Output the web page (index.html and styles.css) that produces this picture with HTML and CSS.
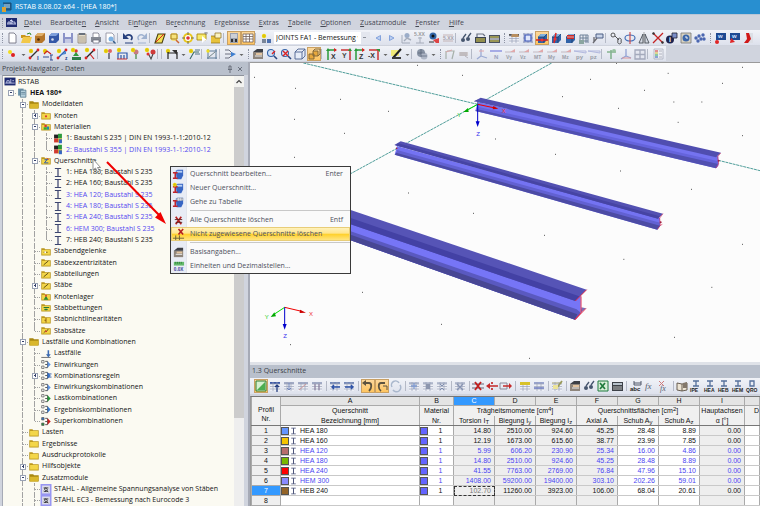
FILE: index.html
```html
<!DOCTYPE html>
<html lang="de">
<head>
<meta charset="utf-8">
<title>RSTAB 8.08.02 x64 - [HEA 180*]</title>
<link rel="stylesheet" href="styles.css">
</head>
<body>
<header class="titlebar">
  <svg class="app-icon" viewBox="0 0 10 10"><path d="M1 1h8v7H4" fill="#24618f" stroke="#174a73"/><path d="M2 3h6M2 5h6" stroke="#bfe0f5"/><path d="M0 5h4v5H0z" fill="#d8a236"/></svg>
  <span>RSTAB 8.08.02 x64 - [HEA 180*]</span>
</header>
<nav class="menubar">
  <i class="grip"></i>
  <svg class="logo" viewBox="0 0 11 9"><path d="M0 0h11v9H0z" fill="#1e2a70"/><path d="M1 6h9M2 6V4h2v2M5 6V2h1v4M7 4h2v2M4 3l1-1 2 2" stroke="#dfe4ff" fill="none" stroke-width=".8"/></svg>
  <button><u>D</u>atei</button><button>Bearbeite<u>n</u></button><button><u>A</u>nsicht</button><button>Ei<u>n</u>fügen</button><button>Be<u>r</u>echnung</button><button>Er<u>g</u>ebnisse</button><button><u>E</u>xtras</button><button><u>T</u>abelle</button><button><u>O</u>ptionen</button><button><u>Z</u>usatzmodule</button><button><u>F</u>enster</button><button><u>H</u>ilfe</button>
</nav>
<div class="toolbars">
  <div class="toolrow">
    <div class="toolbar" data-tools="new open box boxblue save paper print preview | undo redo | para find target select folderout | *panel *grid | nodesun"></div>
    <label class="combo"><select aria-label="Lastfall"><option>JOINTS FA1 - Bemessung v</option></select></label>
    <div class="toolbar joined" data-tools="prev next person vals eye valsred | glasses sheet sheet2"></div>
    <div class="toolbar" data-tools="hand gridblue *cubered cuberot cubefill mesh clip | chain rotate mirror delete link clock dots"></div>
    <div class="toolbar grow" data-tools="flagblue flagred pdf"></div>
  </div>
  <div class="toolrow">
    <div class="toolbar" data-tools="node v member section memset support hinge | pin frame pinred pins || dim v dimgreen | raster | flow v"></div>
    <div class="toolbar" data-tools="photo zoomin zoomout cube *cubes | vx vy vz vmx v pencil v | globe v"></div>
    <div class="toolbar" data-tools="deform note | axes n qy qz mt my mz py pz | greenup axes2 windows | legend"></div>
  </div>
</div>
<main class="work">
  <aside class="navigator">
    <h2 class="panel-title"><span>Projekt-Navigator - Daten</span>
      <button aria-label="Anheften"><svg viewBox="0 0 6 8"><path d="M1 4.5h4M2 4V1h2v3M3 5v3" stroke="#555c68" fill="none" stroke-width=".8"/></svg></button>
      <button aria-label="Schließen"><svg viewBox="0 0 6 8"><path d="M1 2l4 4M5 2L1 6" stroke="#555c68" stroke-width=".8"/></svg></button>
    </h2>
    <div class="tree-frame">
      <ul class="tree" id="tree"></ul>
      <div class="scroll"><svg viewBox="0 0 9 11"><path d="M2 7l2.500-2.500L7 7" fill="none" stroke="#444" stroke-width="1.200"/></svg><div class="thumb"></div></div>
    </div>
  </aside>
  <section class="right">
    <div class="view">
      <svg viewBox="0 3 1530 897" preserveAspectRatio="xMinYMin slice">
        <g stroke="#2c8a86" stroke-width="2.500" stroke-dasharray="9 2" fill="none"><path d="M160 3L683 127M905 3L683 127L302 335M1405 295L1530 326"/></g>
        <path id="specks" stroke="#555" stroke-width="3" d=""/>
        <g>
          <path d="M683 120L1405 283V312L1398 319L676 147Z" fill="#7473f0"/>
          <path d="M683 140L1405 304L1398 319L676 147Z" fill="#5150b0"/>
          <path d="M683 134L1405 298V306L683 142Z" fill="#6564dc"/>
          <path d="M673 118L692 107L1413 272L1398 286Z" fill="#504eb0"/>
          <path d="M683 119V142M673 118L683 114" stroke="#45438f" stroke-width="2"/>
          <path d="M1412 273L1403 284L1406 306L1398 318" stroke="#d3315a" stroke-width="2" fill="none"/>
          <circle cx="1406" cy="296" r="3" fill="#a02040"/>
        </g>
        <g>
          <path d="M441 252L1230 468V490L1222 503L434 278Z" fill="#7473f2"/>
          <path d="M441 270L1232 490L1222 503L434 278Z" fill="#4c4ba4"/>
          <path d="M441 264L1230 482V491L441 273Z" fill="#6261d2"/>
          <path d="M433 249L452 238L1239 455L1224 470Z" fill="#5351b2"/>
          <path d="M436 250L1224 470L1229 463L445 244Z" fill="#4644a4"/>
          <path d="M1239 455L1229 468L1231 490L1222 502M1231 490l6-3" stroke="#d3315a" stroke-width="2" fill="none"/>
          <circle cx="1232" cy="481" r="3" fill="#a02040"/><circle cx="440" cy="259" r="2.500" fill="#a02040"/>
        </g>
        <g>
          <path d="M302 470L992 700V752L975 773L302 535Z" fill="#7675f6"/>
          <path d="M302 508L980 742L992 752L975 773L302 535Z" fill="#5a59c0"/>
          <path d="M302 518L982 757L975 773L302 535Z" fill="#484794"/>
          <path d="M302 444L1010 683L976 717L302 487Z" fill="#5654b6"/>
          <path d="M302 468L988 703L976 717L302 487Z" fill="#4341a4"/>
          <path d="M992 752L1008 739L994 736Z" fill="#7a6fb5"/>
          <path d="M1010 683L976 717M993 703V752L975 773L1008 739" stroke="#e02b4c" stroke-width="3" fill="none"/>
        </g>
        <g fill="none" stroke-width="3">
          <path d="M683 127L735 138" stroke="#e00"/><path d="M730 132L745 140L728 142Z" fill="#c00"/>
          <path d="M683 127L650 145" stroke="#0d0"/><path d="M654 138L640 150L656 150Z" fill="#0a0"/>
          <path d="M683 127V185" stroke="#00c"/><path d="M677 178H689L683 195Z" fill="#00c"/>
        </g>
        <g fill="none" stroke-width="3">
          <path d="M104 736L155 748" stroke="#e00"/><path d="M150 743L168 752L149 753Z" fill="#c00"/>
          <path d="M104 736L72 757" stroke="#0d0"/><path d="M73 751L62 765L78 763Z" fill="#0a0"/>
          <path d="M104 736V792" stroke="#00c"/><path d="M98 786H110L104 803Z" fill="#00c"/>
        </g>
        <g class="axis">
          <text x="755" y="153" fill="#e33">X</text><text x="622" y="164" fill="#2c2">Y</text><text x="679" y="221" fill="#33e">Z</text>
          <text x="177" y="761" fill="#e33">X</text><text x="44" y="772" fill="#2c2">Y</text><text x="100" y="829" fill="#33e">Z</text>
        </g>
      </svg>
    </div>
    <section class="sheet">
      <h2 class="panel-title"><span>1.3 Querschnitte</span></h2>
      <div class="toolbar spread" data-tools="*green tbl1 tbl2 tbl3 tbl4 | in out | *ret *ret2 cycle | m1 m2 m3 | mx | rowdel rowin rowout | rows rows2 | edit | photo glasses excel calc | abc fx fxx | book ipe hea heb hem qro"></div>
      <div class="table-frame">
        <table>
          <colgroup><col class="c-no"><col class="c-name"><col class="c-mat"><col class="c-v"><col class="c-v"><col class="c-v"><col class="c-v"><col class="c-v"><col class="c-v"><col class="c-axis"><col></colgroup>
          <thead>
            <tr class="letters"><th rowspan="3" class="corner">Profil<br>Nr.</th><th>A</th><th>B</th><th class="sel">C</th><th>D</th><th>E</th><th>F</th><th>G</th><th>H</th><th>I</th><th></th></tr>
            <tr class="top"><th>Querschnitt</th><th>Material</th><th colspan="3">Trägheitsmomente [cm<sup>4</sup>]</th><th colspan="3">Querschnittsflächen [cm<sup>2</sup>]</th><th>Hauptachsen</th><th class="cut">D</th></tr>
            <tr><th>Bezeichnung [mm]</th><th>Nr.</th><th>Torsion I<sub>T</sub></th><th>Biegung I<sub>y</sub></th><th>Biegung I<sub>z</sub></th><th>Axial A</th><th>Schub A<sub>y</sub></th><th>Schub A<sub>z</sub></th><th>α [°]</th><th></th></tr>
          </thead>
          <tbody id="rows"></tbody>
        </table>
      </div>
    </section>
  </section>
</main>

<div class="context" role="menu">
  <button role="menuitem"><span class="ci" data-icon="csec"></span><span class="ct">Querschnitt bearbeiten...</span><kbd>Enter</kbd></button>
  <button role="menuitem"><span class="ci" data-icon="csecnew"></span><span class="ct">Neuer Querschnitt...</span></button>
  <button role="menuitem"><span class="ci" data-icon="csectab"></span><span class="ct">Gehe zu Tabelle</span></button>
  <hr>
  <button role="menuitem"><span class="ci" data-icon="delall"></span><span class="ct">Alle Querschnitte löschen</span><kbd>Entf</kbd></button>
  <button role="menuitem" class="hot"><span class="ci" data-icon="delun"></span><span class="ct">Nicht zugewiesene Querschnitte löschen</span></button>
  <hr>
  <button role="menuitem"><span class="ci" data-icon="photo"></span><span class="ct">Basisangaben...</span></button>
  <button role="menuitem"><span class="ci" data-icon="units"></span><span class="ct">Einheiten und Dezimalstellen...</span></button>
</div>
<svg class="pointer" viewBox="0 0 90 80">
  <path d="M17 7L69 60" stroke="#f00000" stroke-width="2"/><path d="M76 69L65 62.500L70.500 57Z" fill="#f00000"/>
  <path d="M3 4V15L5.500 13L7.500 17L9.500 16L7.500 12.500H10.500Z" fill="#fff" stroke="#777" stroke-width=".8"/>
</svg>
<script src="app.js"></script>
</body>
</html>
```
FILE: styles.css
```css
* { box-sizing: border-box; }
body {
  margin: 0;
  height: 100vh;
  display: flex;
  flex-direction: column;
  overflow: hidden;
  background: #d0d4de;
  color: #1c1c1c;
  font: 7px/10px "Open Sans", "Noto Sans", sans-serif;
}
button { margin: 0; padding: 0; border: 0; background: none; font: inherit; color: inherit; }
svg { display: block; }
h2 { margin: 0; font: inherit; }
ul { margin: 0; padding: 0; list-style: none; }

.titlebar {
  flex: none;
  height: 14px;
  display: flex;
  align-items: center;
  gap: 3px;
  padding-left: 2px;
  background: #288fd0;
  color: #fff;
}
.app-icon { width: 10px; height: 10px; }
.menubar {
  flex: none;
  height: 16px;
  display: flex;
  align-items: center;
  gap: 9px;
  padding-left: 2px;
  border-top: 1px solid #b9c6d6;
  background: #d0d4de;
  color: #454852;
}
.menubar .grip { margin-right: -8px; }
.logo { width: 11px; height: 9px; margin-right: -2px; }
.menubar u { text-underline-offset: 1px; }
.grip { flex: none; width: 3px; height: 10px; border-left: 1px dotted #8e94a4; }

.toolbars { flex: none; }
.toolrow { display: flex; height: 16px; }
.toolbar {
  display: flex;
  align-items: center;
  height: 16px;
  padding: 0 1px 0 2px;
  border-bottom: 1px solid #cfd3dd;
  background: linear-gradient(#f1f3f8, #dde1ec);
}
.toolbar.joined { padding-left: 1px; }
.toolbar.grow { flex: 1; overflow: hidden; }
.toolbar button { flex: none; width: 14px; height: 14px; }
.toolbar button.drop { width: 8px; }
.toolbar button svg { width: 100%; height: 14px; }
.toolbar button.on { background: linear-gradient(#fbd9a0, #ffc45c); box-shadow: inset 0 0 0 1px #c9a063; }
.toolbar button.dim { opacity: .7; }
.toolbar .sep { flex: none; width: 4px; height: 10px; border-left: 1px solid #b4b9c6; }
.toolbar.spread .sep { flex: 1; margin-left: 2px; }
.combo { display: flex; align-items: center; background: linear-gradient(#f1f3f8, #dde1ec); border-bottom: 1px solid #cfd3dd; }
.combo select {
  appearance: none;
  width: 96px;
  height: 12px;
  padding: 0 12px 0 2px;
  border: 0;
  border-radius: 0;
  background: linear-gradient(#8a8f99, #8a8f99) right 4px center / 3px 1px no-repeat, linear-gradient(#e3e6ee, #e3e6ee) right / 9px 100% no-repeat, #fff;
  font: inherit;
  color: #111;
}

.work { flex: 1; min-height: 0; display: flex; }
.navigator { flex: none; width: 250px; display: flex; flex-direction: column; border-right: 2px solid #a6aab6; }
.panel-title {
  flex: none;
  height: 13px;
  display: flex;
  align-items: center;
  gap: 4px;
  padding: 0 5px 0 2px;
  background: #b9c0cc;
  color: #3b4048;
}
.panel-title span { flex: 1; }
.panel-title button svg { width: 6px; height: 8px; }
.tree-frame {
  flex: 1;
  min-height: 0;
  display: flex;
  margin-left: 2px;
  margin-right: 4px;
  border-top: 1px solid #8d929c;
  border-left: 1px solid #a6aab6;
  background: #fbfaf2;
}
.tree { flex: 1; display: grid; grid-auto-rows: 1fr; padding-left: 1px; color: #141414; }
.tree li { display: flex; align-items: center; white-space: nowrap; min-height: 0; }
.tree li > span { padding-left: 2px; }
.tree li.blue { color: #5348f0; }
.tree li.bold { font-weight: 700; }
.tree .icon { flex: none; width: 12px; height: 11px; }
.guide { flex: none; width: 12px; height: 100%; position: relative; }
.guide::before { content: ""; position: absolute; left: 6px; top: 0; bottom: 0; border-left: 1px dashed #a2a2a2; }
.guide.blank::before { display: none; }
.guide.last::before { bottom: 50%; }
.guide.tee::after { content: ""; position: absolute; left: 7px; right: 0; top: 50%; border-top: 1px dotted #a2a2a2; }
.guide button { position: absolute; z-index: 1; left: 4px; top: 3px; width: 6px; height: 6px; background: #fff; border: 1px solid #9aa3b5; }
.guide button::before { content: ""; position: absolute; left: 1px; right: 1px; top: 1px; height: 1px; background: #34406a; }
.guide button.plus::after { content: ""; position: absolute; top: 0; bottom: 1px; left: 2px; width: 1px; background: #34406a; }
.scroll { flex: none; width: 10px; background: #eeeeee; display: flex; flex-direction: column; }
.scroll svg { height: 11px; background: #f3f3f0; }
.thumb { height: 77%; background: #cccccc; }

.right { flex: 1; min-width: 0; display: flex; flex-direction: column; }
.view { flex: 1; min-height: 0; overflow: hidden; border-top: 1px solid #9a9a9a; background: #fcfcfc; }
.view svg { width: 100%; height: 100%; }
.axis { font: 18px "Liberation Sans", sans-serif; }
.sheet { flex: none; border-top: 3px solid #dfe2e8; display: flex; flex-direction: column; }
.sheet .toolbar { flex: none; padding: 0 1px 0 4px; height: 17px; }
.sheet .toolbar .grip { display: none; }
.table-frame { margin-top: 1px; border-top: 1px solid #777; border-left: 1px solid #999; background: #fff; }
table {
  width: 100%;
  table-layout: fixed;
  border-collapse: collapse;
  font: 7px/9px "Liberation Sans", sans-serif;
  color: #111;
}
.c-no { width: 29px; }
.c-name { width: 139px; }
.c-mat { width: 34px; }
.c-v { width: 41px; }
.c-axis { width: 45px; }
th, td { height: 10px; padding: 0; white-space: nowrap; overflow: hidden; }
th { font-weight: 400; background: #f0f0f0; border-right: 1px solid #aaa; }
thead tr:last-child th { border-bottom: 1px solid #777; }
.letters th { height: 9px; line-height: 8px; background: #e4e4e4; border: 1px solid #aaa; border-top: 0; }
.letters .sel, tbody .sel { background: #3399ff; color: #fff; }
.letters .corner { background: #f0f0f0; line-height: 9px; border-bottom-color: #777; padding-top: 6px; }
th.cut { text-align: left; padding-left: 9px; }
sup, sub { font-size: 6px; line-height: 0; }
sup { vertical-align: 2px; }
sub { vertical-align: -1px; }
td { text-align: right; padding-right: 3px; border: 1px solid #c9c9c9; border-right-color: #aaa; }
tbody th { border: 1px solid #aaa; background: #efefef; }
td.shade { background: #eeeeee; }
td.name, td.mat { padding: 0; }
.cell { display: flex; align-items: center; height: 9px; }
.cell i { flex: none; width: 8px; height: 8px; border: 1px solid #555; }
.cell svg { width: 9px; height: 8px; margin-right: 2px; }
.mat .cell span { flex: 1; text-align: center; }
tr.blue td { color: #4a44f2; }
td.focus { outline: 1px dashed #333; outline-offset: -1px; color: #777; }

.context {
  position: absolute;
  left: 170px;
  top: 166px;
  width: 181px;
  border: 1px solid #3a3a3a;
  background: linear-gradient(90deg, #e8ecf5 15px, #c9cfdc 15px, #fafafa 16px);
  color: #4c505c;
}
.context button { width: 100%; height: 14px; display: flex; align-items: center; text-align: left; }
.context .ci { width: 15px; padding-left: 1px; }
.context .ci svg { width: 13px; height: 13px; }
.context .ct { flex: 1; padding-left: 4px; }
.context kbd { font: inherit; padding-right: 7px; }
.context hr { height: 1px; margin: 1px 0 2px 19px; border: 0; background: #c8c8c8; }
.context .hot { background: linear-gradient(#fff4c4, #ffe58c 45%, #ffd028 50%, #ffe88f); box-shadow: inset 0 0 0 1px #e8cd78; }
.pointer { position: absolute; left: 90px; top: 155px; width: 90px; height: 80px; pointer-events: none; }
```
FILE: app.js
```js
// Small drawing helpers, all on a 14 x 14 grid.
const p = (d, s = '#555', w = 1, f = 'none') => `<path d="${d}" stroke="${s}" stroke-width="${w}" fill="${f}"/>`;
const f = (d, c) => `<path d="${d}" fill="${c}"/>`;
const dot = (x, y, r, c) => `<circle cx="${x}" cy="${y}" r="${r}" fill="${c}"/>`;
const txt = (x, y, s, c, n = 6) => `<text x="${x}" y="${y}" font-size="${n}" font-weight="700" font-family="Liberation Sans" fill="${c}">${s}</text>`;
const star = (x, y) => dot(x, y, 2.2, '#f4e11c') + p(`M${x - 2} ${y}h4M${x} ${y - 2}v4`, '#c9a800', .6);
const beam = (c = '#333') => p('M3 11L11 3', c, 1.2) + dot(3, 11, 1.4, '#d22') + dot(11, 3, 1.4, '#d22');
const cubeBlue = f('M3 6l3-3h6v6l-3 3H3z', '#2f62a8') + f('M3 6l3-3h6L9 6z', '#7fb0df') + p('M3 6h6v6M9 6l3-3', '#173860', .7);
const table = (c = '#8b96b4') => f('M2 3h10v9H2z', '#eef0f6') + f('M2 3h10v2H2z', c) + p('M2 5h10M2 7.500h10M2 10h10M5 3v9M9 3v9', '#99a1b8', .7);
const quarter = (t, c) => p('M2 5h10', '#b3a6ae', 1) + f('M7 5l5-3v3z', '#dd8c8c') + txt(3, 12, t, c, 5);
const axisView = (t, side) => p('M3 13V3h8', side, 1.500) + f('M9 1l3 2-3 2z', '#d22') + f('M3 1l2 3H1z', side) + txt(6, 12, t, '#333', 7);
const profile = t => p('M4 2h6M7 2v5M4 7h6', '#55709c', 1.300) + txt(t.length > 2 ? 1 : 3, 13, t, '#222', 5);
const I = (c = '#3d4670') => p('M3 2h8M3 12h8', c, 1.300) + p('M7 2v10', c, 1.600);
const sec3d = f('M4 3l2-1h6v6l-2 4H5z', '#3866c4') + f('M5 3h6v2H5z', '#b9d0f4') + p('M1 5h5M3.500 5v6M1 11h5', '#c0252d', 1.600);

const icons = {
  new: p('M4 2h5l2 2v8H4z', '#667', .8, '#fff'),
  open: f('M2 4h4l1 1h4v2H2z', '#c9961c') + f('M2 12l2-6h9l-2 6z', '#f2c84a') + p('M8 3l3-1 1 2', '#2d8a2d'),
  box: f('M2 5l3-3h7v7l-3 3H2z', '#b5762a') + f('M2 5l3-3h7L9 5z', '#e0b06a') + dot(5.5, 8.5, 1.3, '#4a2c0a'),
  boxblue: f('M2 5l3-3h7v7l-3 3H2z', '#3458a8') + f('M2 5l3-3h7L9 5z', '#7fa0dc') + dot(5.5, 8.5, 1.3, '#d6dcec'),
  save: f('M2 2h10v10H2z', '#8b93c8') + f('M4 2h6v4H4z', '#eef0f9') + f('M4 8h6v4H4z', '#c5cae4'),
  paper: p('M3 3h8v9H3z', '#8b8275', .8, '#e4dccb') + p('M4 6h6M4 8h6M4 10h6', '#988c7a', .7) + f('M4 2h6v2H4z', '#69717c'),
  print: f('M2 6h10v5H2z', '#858a94') + p('M4 6V2h5l1 1v3M4 9h6v3H4z', '#667', .7, '#fff'),
  preview: p('M3 2h6l2 2v8H3z', '#889', .8, '#fff') + dot(8, 8, 2.5, '#7fb2e3') + p('M10 10l2.500 2.500', '#355c8c', 1.400),
  undo: p('M5 5c4-3 8 1 5 4', '#27407c', 1.700) + f('M2 2v6h6z', '#27407c') + p('M4 12h8', '#27407c'),
  redo: p('M9 5c-4-3-8 1-5 4', '#9fb2d0', 1.500) + f('M12 2v6H6z', '#9fb2d0') + p('M3 12h8', '#9fb2d0'),
  para: p('M2 12L5 3h7L9 12z', '#4a4010', 1.100, '#f1df55') + p('M3 11L11 3', '#d22'),
  find: dot(7, 6, 4, '#f6e27a') + p('M4 3h6v5H4z', '#a07818', .9) + p('M9 9l3 3', '#c63', 1.500),
  target: dot(7, 7, 5, '#e9c71a') + dot(7, 7, 3, '#fff') + dot(7, 7, 1.8, '#d33') + p('M7 1v3M7 10v3M1 7h3M10 7h3', '#555', .8),
  select: p('M2 3h9v6H2z', '#aa8a10', .9, '#f6e96a') + f('M7 5v7l2-2 3-1z', '#fff') + p('M11 1v3M9 2h4', '#777', .7),
  folderout: f('M2 5h9v7H2z', '#e7c23c') + f('M6 2h6v5H6z', '#fbf3c0') + p('M6 2h6v5H6zM2 5h4M2 12h9', '#8b6c12', .7),
  panel: f('M3 2h8v10H3z', '#9ba1ae') + p('M4 4h6M4 6h6', '#fff') + f('M4 8h2v3H4zM8 8h2v3H8z', '#333'),
  grid: p('M2 3h10v8H2zM2 5.500h10M2 8h10M5 3v8M8.500 3v8', '#71605a', .8, '#fff'),
  nodesun: star(5, 5) + f('M3 8h4v4H3z', '#7a8598') + f('M8 8h4v4H8z', '#4b6fae'),
  prev: p('M9.500 4.500v5L5 7z', '#6f93d6', .8, '#bcd0f2'),
  next: p('M4.500 4.500v5L9 7z', '#6f93d6', .8, '#bcd0f2'),
  person: dot(8, 4.5, 2.5, '#7b93b8') + p('M3 4v8h8', '#8a94a5') + p('M5 10l3-3 4 2', '#8a94a5', 1.400),
  vals: txt(1, 5, '5.XX', '#777', 5) + p('M3 12h8M7 12V6M5 7h4', '#8f96a6'),
  eye: dot(6, 5, 3.5, '#3266a8') + dot(6, 5, 1.5, '#111') + f('M6 9l6-2v5H9z', '#d44') + p('M2 11h5', '#333'),
  valsred: p('M2 4h10M2 10h10', '#b9a0a0') + txt(2, 9, '5.XX', '#8a8088', 5),
  glasses: dot(4, 9, 2, '#46566e') + dot(9, 8, 2, '#46566e') + p('M4 7l3-4M9 6l3-4', '#46566e', 1.300),
  sheet: f('M2 6h11v6H2z', '#3c4452') + p('M3 8h9M3 10h9', '#e8da4a') + p('M4 6V3h6l2 2', '#6a7282', 1.200),
  sheet2: f('M2 4h11v8H2z', '#4a5260') + p('M3 6h9M3 10h9', '#e8da4a') + p('M3 8h9', '#fff'),
  hand: table('#555') + f('M5 3h6l1 3H4z', '#b98f60'),
  gridblue: p('M2 3h10M2 7h10M2 11h10M3 2v10M7 2v10M11 2v10', '#8992b8', .8) + p('M4 4h6v6H4z', '#3a54b8', 1.200, '#dfe6fb'),
  cubered: cubeBlue + p('M1 9h12', '#d22', 1.500) + dot(7, 9, 1.5, '#e33'),
  cuberot: cubeBlue + p('M7 2L5 12', '#d22', 1.500) + dot(6, 8, 1.5, '#e33'),
  cubefill: cubeBlue + f('M4 4h7v4H4z', '#c92a2a') + p('M4 6h7', '#fff', .6),
  mesh: p('M3 12V4h8v8M3 7h8M3 10h8M6 4v8M9 4v8', '#6f8299', 1) + f('M2 9h5v4H2z', '#8ba6a0'),
  clip: p('M5 3h7v4H5z', '#4c5f84', 1, '#c9d4e8') + p('M2 12l4-5M3 6v5', '#6a6a70', 1.300),
  chain: p('M2 4a2 2 0 1 1 4 0 2 2 0 1 1-4 0M6 5l4 4M9 10a1.800 1.800 0 1 1 3 0 1.800 1.800 0 1 1-3 0', '#444', .9),
  rotate: p('M2 7a5 3 0 1 0 10 0a5 3 0 1 0-10 0', '#4570b8', 1.200) + p('M7 1v12', '#c33'),
  mirror: p('M6 3v9H2zM8 3v9h4z', '#4a5058', .9, '#d5dae3') + p('M7 1v12', '#777', .6),
  delete: p('M2 2l10 10M12 2L2 12', '#c42222', 1.300) + dot(2.5, 2.5, 1.2, '#333') + dot(11.5, 11.5, 1.2, '#333'),
  link: dot(5, 8.5, 4, '#1d2450') + txt(4, 11, 'i', '#fff', 7) + p('M7 2h5v5H7z', '#223', .8, '#7b8ec9'),
  clock: p('M2 2h10v10H2z', '#777', .8, '#d8d2c0') + dot(7, 7, 3.5, '#3c66a8') + p('M7 5v2h2', '#fff', .9),
  dots: [[3, 7], [6, 5], [10, 4], [8, 8], [5, 10], [11, 8]].map(a => dot(a[0], a[1], 1.7, '#4a66b0')).join(''),
  flagblue: f('M3 2h10v7H3z', '#1f4a92') + txt(5, 7, 'w', '#cfe0ff', 6) + dot(4, 11, 2, '#e02626'),
  flagred: f('M3 2h10v7H3z', '#1f4a92') + txt(5, 7, 'w', '#cfe0ff', 6) + f('M3 12l1-5 4 4z', '#e02626'),
  pdf: f('M7 2h5v10H7z', '#dcdfe6') + f('M5 2h3l2 6-3 4H3l3-4z', '#d01818'),
  node: dot(5, 5, 2, '#f0dd20') + dot(8, 8, 2, '#d22'),
  member: star(4, 4) + beam() + txt(10, 13, 'I', '#24408c', 6),
  section: star(4, 4) + p('M3 7l3-3 4 3', '#c22', 1.200) + p('M2 10h6M10 8v5M9 8h3M9 13h3', '#334a90'),
  memset: star(4, 4) + beam('#2a62b0') + f('M6 8l5-4v3z', '#4d86cf') + txt(10, 13, 'z', '#24408c', 5),
  support: dot(7, 4, 1.8, '#d33') + star(4, 3) + f('M7 5l3 4H4z', '#2f9a3c') + f('M3 10h9v3H3z', '#2d7d4a'),
  hinge: star(4, 3) + beam('#222') + p('M7 7l4 5', '#c22', 1.200),
  pin: star(5, 4) + dot(9, 4, 2, '#d66') + p('M8 6v6', '#445', 1.300),
  frame: star(4, 3) + p('M3 12V6h9v6M6 12V8M9 12V8', '#2c56a8', 1.200) + p('M2 12h10', '#c33'),
  pinred: dot(7, 5, 2.5, '#c77a82') + p('M7 7v5', '#4c8a4c', 1.300) + star(4, 3),
  pins: star(4, 3) + dot(10, 5, 2.5, '#cf3a3a') + p('M5 6l3 6 2-5', '#444', 1.100) + dot(5, 7, 1.5, '#d33'),
  dim: star(3, 4) + p('M3 12V5M12 12V5M3 6h9', '#222', 1.200) + f('M7 3h5v5z', '#333'),
  dimgreen: star(4, 4) + p('M3 12l4-7h5', '#3a6a6a', 1.100) + p('M8 3h5M8 7h5', '#467', .9),
  raster: p('M3 2v10M11 2v10M2 4h10M2 11h10', '#5c7a96', 1) + dot(3, 4, 1.7, '#f0dd20') + p('M4 10l6-5', '#788'),
  flow: p('M2 3h4l4 4-4 4H2', '#6c7080', 1) + f('M8 5l5 2-5 3z', '#3f7fd0') + p('M2 7h6', '#6c7080'),
  photo: f('M2 5h10v7H2z', '#8e857c') + f('M2 5l4-3h6v3z', '#3c3f46') + f('M5 6h6v2H5z', '#e3c49f') + p('M4 9h7', '#eee'),
  zoomin: dot(6, 6, 3.5, '#cfe0f5') + p('M2.500 6a3.500 3.500 0 1 0 7 0a3.500 3.500 0 1 0-7 0', '#3664a8', 1.100) + p('M9 9l3 3', '#2a4880', 1.600) + p('M7 7l3-3', '#d22', 1.400),
  zoomout: dot(6, 6, 3.5, '#d6e0f5') + p('M2.500 6a3.500 3.500 0 1 0 7 0a3.500 3.500 0 1 0-7 0', '#3664a8', 1.100) + p('M9 9l3 3', '#2a4880', 1.600) + p('M4 4l5 5M9 4L4 9', '#d22', 1.400),
  cube: p('M2 5h7v7H2zM2 5l3-3h7v7l-3 3M9 5l3-3', '#4c6390', .9, '#e6ecf7'),
  cubes: p('M2 7h5v5H2zM6 4h5v5H6z', '#7a6238', .9, '#e8a83c') + p('M6 4l2-2h5v5l-2 2', '#7a6238', .9),
  vx: axisView('X', '#2a9a3a'), vy: p('M2 3h9v10', '#c33', 1.500) + f('M11 1l2 3H9z', '#2a9a3a') + txt(3, 11, 'Y', '#444', 7), vz: axisView('Z', '#2a9a3a'),
  vmx: p('M2 3h9v10', '#c33', 1.500) + txt(1, 11, '-X', '#333', 7) + f('M9 2h4v3z', '#2a9a3a'),
  pencil: f('M2 3h8v6H2z', '#f1ea78') + p('M12 2L4 11', '#222', 2) + f('M3 10h9v2H3z', '#3b3b3b'),
  globe: dot(6, 6, 4, '#8792a4') + dot(9, 9, 3.5, '#aeb6c6') + p('M3 6h7M6 2v8M6 9h6', '#59647a', .7),
  deform: p('M3 12V4M4 4h7l-2 8', '#8d9a8e', 1.200) + p('M3 5l6-2', '#cf8c8c', 1.200),
  note: f('M2 5h9v4H2z', '#c7bfbd') + p('M3 6h7M3 8h7M8 9l3 2', '#8a8288', .7),
  axes: p('M6 2v7l-4 3M6 9l6 2', '#7f93c8', 1.300) + p('M4 4h5', '#d88', 1),
  n: p('M1 4h12', '#8a90e0', 2) + txt(5, 12, 'N', '#7b83a8', 6),
  qy: quarter('Vy', '#7a8088'), qz: quarter('Vz', '#7a8088'), mt: quarter('MT', '#7a8088'), my: quarter('My', '#7a8088'), mz: quarter('Mz', '#7a8088'),
  py: p('M1 4h12v2z', '#9ba3d6', 1) + txt(3, 12, 'py', '#7a7f8a', 6), pz: p('M1 4h12v2z', '#9ba3d6', 1) + txt(3, 12, 'pz', '#7a7f8a', 6),
  greenup: p('M6 12V3M2 5h9', '#5d9d68', 1.600) + dot(9, 4, 2, '#76b07f'),
  axes2: p('M7 2v7l-5 3M7 9l5 2', '#6f84c8', 1.300) + p('M3 11h9', '#d77', 1),
  windows: p('M2 3h10v9H2zM7 3v9M2 7.500h10', '#8990a6', 1.300, '#e3e6ef'),
  legend: p('M3 2h9v10H3z', '#9298a8', .8, '#eef0f5') + f('M4 3h3v2H4z', '#d66') + f('M4 5h3v2H4z', '#dc6') + f('M4 7h3v2H4z', '#6b8') + f('M4 9h3v2H4z', '#68c') + p('M8 4h3M8 7h3M8 10h3', '#889', .8),
  green: p('M2 2h10v10H2z', '#2f7d33', 1, '#d5f0cf') + f('M3 11l8-8v8z', '#4cae50'),
  tbl1: table('#3b58a5') + p('M9 13V6M7 8l2-2 2 2', '#223c80', 1.200), tbl2: table('#a2abc6') + p('M7 4v7M5 9l2 2 2-2', '#7388bd'),
  tbl3: table('#a2abc6') + p('M3 11l7-6', '#c99'), tbl4: table('#a2abc6') + p('M5 11V5M9 11V5', '#8a7a9a'),
  in: table('#7389b8') + p('M12 8H4M6 6L4 8l2 2', '#2d52a8', 1.400), out: table('#7389b8') + p('M3 8h8M9 6l2 2-2 2', '#2d52a8', 1.400),
  ret: p('M4 4h4c3 0 3 5 0 8', '#5c5340', 1.800) + f('M5 1v6L1 4z', '#5c5340'),
  ret2: p('M10 4H6c-3 0-3 6 0 8', '#5c5340', 1.800) + p('M8 7h4v4', '#5c5340'),
  cycle: p('M3 8a4 4 0 0 1 7-4M11 6a4 4 0 0 1-7 5', '#a9b7cc', 1.500),
  m1: table('#b9c0d3') + p('M4 7h6M7 4v6', '#7f9ad0', 1.300), m2: table('#b9c0d3') + f('M5 5h4v5H5z', '#8c96ae'), m3: table('#b9c0d3') + p('M5 5l2 2 2-2M5 11l2-2 2 2', '#7f8eb0'),
  mx: table('#b9c0d3') + p('M4 5l6 6M10 5l-6 6', '#8693b2', 1.300),
  rowdel: p('M1 5h12M1 9h12', '#667', 1.200) + p('M4 3l6 8M10 3L4 11', '#c21d1d', 1.800),
  rowin: p('M3 7h10M7 3v2M7 9v2', '#c42a2a', 1.700) + f('M1 7l4-3v6z', '#c42a2a'),
  rowout: p('M1 4h7v6H1z', '#889', 1) + p('M4 7h7', '#c42a2a', 1.500) + f('M13 7l-3-3v6z', '#c42a2a'),
  rows: table('#d6b416') + f('M2 3h10v3H2z', '#d8c22a'), rows2: table('#98a4d0') + p('M2 9h10', '#6e7cc0', 1.500),
  edit: table('#c9c9b0') + p('M12 2L6 10', '#9a9a5a', 1.700) + f('M3 6h5v4H3z', '#ece49a'),
  excel: p('M2 2h10v10H2z', '#1f7a3c', 1, '#d9efd9') + p('M4 4l5 6M9 4l-5 6', '#1f7a3c', 1.700),
  calc: f('M2 3h11v9H2z', '#3d4148') + f('M3 4h9v2H3z', '#b8c2cc') + p('M3 8h9M3 10h9', '#c9c9c9', .9),
  abc: p('M5 4h7M5 2v4h7V2', '#50586a', 1) + txt(1, 12, 'abc', '#222', 6),
  fx: `<text x="2" y="10" font-size="9" font-style="italic" font-family="Liberation Serif" fill="#555e70">fx</text>`,
  fxx: `<text x="3" y="12" font-size="8" font-style="italic" font-family="Liberation Serif" fill="#555e70">fx</text>` + p('M2 2l5 5M7 2L2 7', '#d07a7a'),
  book: p('M2 4l5 1 5-1v7l-5 1-5-1zM7 5v7', '#5b5044', .9, '#ece4d4') + f('M8 4l4-1v6H8z', '#83786b'),
  ipe: profile('IPE'), hea: profile('HEA'), heb: profile('HEB'), hem: profile('HEM'),
  qro: p('M5 2h4v5H5z', '#55709c', 1.300) + txt(1, 13, 'QRO', '#222', 5),
  csec: sec3d, csecnew: sec3d + star(3, 3), csectab: sec3d + f('M5 2h7v3H5z', '#99a0ac') + p('M7 2v3M9 2v3M5 3.500h7', '#fff', .5),
  delall: p('M4 3l6 8M10 3l-6 8', '#b51f1f', 1.800) + p('M3 6h8M4 9h7', '#5d2222', 1),
  delun: p('M7 1l5 6M12 1L7 7', '#b51f1f', 1.700) + p('M1 11h12M4 8v5M8 8v5', '#5c5330', .9),
  units: f('M2 2h11v4H2z', '#62b86a') + p('M4 2v2M6 2v2M8 2v2M10 2v2', '#1d6a2a', .7) + txt(2, 12, '0.0X', '#333a90', 5),
};
const faded = new Set('deform note axes n qy qz mt my mz py pz greenup axes2 windows legend person vals valsred'.split(' '));
const drawIcon = name => `<svg viewBox="0 0 14 14">${icons[name] || ''}</svg>`;

document.querySelectorAll('[data-tools]').forEach(bar => {
  let html = bar.classList.contains('joined') ? '' : '<i class="grip"></i>';
  bar.dataset.tools.split(' ').forEach(t => {
    if (t[0] === '|') html += '<i class="sep"></i>'.repeat(t.length);
    else if (t === 'v') html += '<button class="drop" aria-label="Auswahl"><svg viewBox="0 0 8 14"><path d="M2.500 7h4l-2 2z" fill="#666"/></svg></button>';
    else {
      const name = t.replace('*', '');
      const cls = t[0] === '*' ? 'on' : faded.has(name) ? 'dim' : '';
      html += `<button aria-label="${name}" class="${cls}">${drawIcon(name)}</button>`;
    }
  });
  bar.innerHTML = html;
});
document.querySelectorAll('[data-icon]').forEach(el => { el.innerHTML = drawIcon(el.dataset.icon); });

// Navigator icons.
const folder = mark => f('M1 3h4l1 1h7v8H1z', '#b9951b') + f('M2 5h10v6H2z', '#f3d649') + (mark || '');
const combo = (c1, c2 = '#fff', c3 = '#fff') => p('M1.500 2h3v3h-3z', '#555', .9, c2) + p('M1.500 9h3v3h-3z', '#555', .9, c3) + p('M6 3h3v8H6M6 7h3', '#444', 1.100) + f('M9 3l4 4-4 4z', c1);
const nav = {
  app: f('M0 2h14v10H0z', '#1e2a70') + p('M1 9h12M3 9V6h3v3M8 9V4M10 6h2', '#dfe4ff', 1),
  doc: f('M2 2h7v9H2z', '#6c93ab') + p('M5 4h7v9H5z', '#4d7085', .9, '#b4d0dc') + p('M6 7h5M6 9h5', '#4d7085', .8),
  open: f('M1 3h5l1 1h6v8H1z', '#a88710') + f('M2 6h11l-1 6H2z', '#d9b72c'),
  folder: folder(), fnode: folder(dot(7, 8, 1.4, '#d33')), fmat: folder(f('M5 5h3v3H5z', '#d33') + f('M8 7h3v4H8z', '#28a') + f('M4 8h4v3H4z', '#3a3')),
  fsec: folder(p('M5 10l4-5M5 6h4M5 10h5', '#2a55b0', 1.200) + p('M8 4l3 2', '#d33')), fhin: folder(p('M4 8h5', '#6b5310', 1.200) + dot(6, 8, 1.2, '#fff')),
  fbeam: folder(p('M4 10l6-5', '#5b4812', 1.200)), fsup: folder(f('M7 6l3 5H4z', '#2a8a35') + dot(7, 6, 1.2, '#d33')),
  fbed: folder(p('M4 7h7M5 9l1 1 1-1 1 1 1-1', '#257a35', 1.300)), fnl: folder(p('M7 5v6M5 8h2', '#8a5a10', 1.200)),
  fset: folder(p('M4 10l3-3M7 9l3-4', '#5b4812', 1.100) + dot(7, 8, 1.1, '#d33')),
  mat: f('M2 2h5v5H2z', '#222') + f('M7 1h5v6H7z', '#2d9a3c') + f('M2 7h5v5H2z', '#d23b2e') + f('M7 7h5v5H7z', '#e0b51f') + f('M8 8h4v5H8z', '#3565c5'),
  sec: I(), load: p('M1 12h12', '#777', 1.300) + f('M9 3h2v5h2l-3 4-3-4h2z', '#3c6bb2'),
  cblue: combo('#3478d0'), crule: combo('#3478d0') + p('M9 5h5M9 9h5', '#3458a8', 1.200), clight: combo('#5d92e0'), cgreen: combo('#25963a'), cred: combo('#c81e1e', '#3478d0', '#25963a'),
  mod: f('M0 0h14v14H0z', '#9896f2') + f('M2 2h10v10H2z', '#dcdcea') + p('M4 9c3 2 6-1 4-3s-4 0-2 2l4 2M4 5h6', '#333', 1.200),
};
// One letter per indent step: b blank, | line, t branch, e last branch, m minus, p plus, M minus without a line.
const rows = [
  ['', 'app', 'RSTAB'], ['M', 'doc', 'HEA 180*', 'bold'], ['bm', 'open', 'Modelldaten'],
  ['b|p', 'fnode', 'Knoten'], ['b|m', 'fmat', 'Materialien'],
  ['b||t', 'mat', '1: Baustahl S 235 | DIN EN 1993-1-1:2010-12'], ['b||e', 'mat', '2: Baustahl S 355 | DIN EN 1993-1-1:2010-12', 'blue'],
  ['b|m', 'fsec', 'Querschnitte'],
  ['b||t', 'sec', '1: HEA 180; Baustahl S 235'], ['b||t', 'sec', '2: HEA 160; Baustahl S 235'],
  ['b||t', 'sec', '3: HEA 120; Baustahl S 235', 'blue'], ['b||t', 'sec', '4: HEA 180; Baustahl S 235', 'blue'],
  ['b||t', 'sec', '5: HEA 240; Baustahl S 235', 'blue'], ['b||t', 'sec', '6: HEM 300; Baustahl S 235', 'blue'], ['b||e', 'sec', '7: HEB 240; Baustahl S 235'],
  ['b|t', 'fhin', 'Stabendgelenke'], ['b|t', 'fbeam', 'Stabexzentrizitäten'], ['b|t', 'fbeam', 'Stabteilungen'], ['b|p', 'fbeam', 'Stäbe'],
  ['b|t', 'fsup', 'Knotenlager'], ['b|t', 'fbed', 'Stabbettungen'], ['b|t', 'fnl', 'Stabnichtlinearitäten'], ['b|e', 'fset', 'Stabsätze'],
  ['bm', 'open', 'Lastfälle und Kombinationen'],
  ['b|t', 'load', 'Lastfälle'], ['b|t', 'clight', 'Einwirkungen'], ['b|p', 'crule', 'Kombinationsregeln'], ['b|t', 'clight', 'Einwirkungskombinationen'],
  ['b|t', 'cgreen', 'Lastkombinationen'], ['b|t', 'cblue', 'Ergebniskombinationen'], ['b|e', 'cred', 'Superkombinationen'],
  ['bt', 'folder', 'Lasten'], ['bt', 'folder', 'Ergebnisse'], ['bt', 'folder', 'Ausdruckprotokolle'], ['bp', 'folder', 'Hilfsobjekte'],
  ['bm', 'open', 'Zusatzmodule'], ['b|t', 'mod', 'STAHL - Allgemeine Spannungsanalyse von Stäben'], ['b|t', 'mod', 'STAHL EC3 - Bemessung nach Eurocode 3'],
];
const guide = {
  b: '<i class="guide blank"></i>', '|': '<i class="guide"></i>', t: '<i class="guide tee"></i>', e: '<i class="guide tee last"></i>',
  m: '<i class="guide tee"><button aria-label="Zuklappen"></button></i>', p: '<i class="guide tee"><button class="plus" aria-label="Aufklappen"></button></i>',
  M: '<i class="guide blank tee"><button aria-label="Zuklappen"></button></i>',
};
document.getElementById('tree').innerHTML = rows.map(([g, ic, label, cls]) =>
  `<li class="${cls || ''}">${[...g].map(c => guide[c]).join('')}<svg class="icon" viewBox="0 0 14 14">${nav[ic]}</svg><span>${label}</span></li>`).join('');

// Cross-section table.
const data = [
  ['#6495ff', 'HEA 180', '14.80 2510.00 924.60 45.25 28.48 8.89'], ['#f5c400', 'HEA 160', '12.19 1673.00 615.60 38.77 23.99 7.85'],
  ['#b86c6c', 'HEA 120', '5.99 606.20 230.90 25.34 16.00 4.86', 1], ['#7ab800', 'HEA 180', '14.80 2510.00 924.60 45.25 28.48 8.89', 1],
  ['#ff0000', 'HEA 240', '41.55 7763.00 2769.00 76.84 47.96 15.10', 1], ['#8a8aff', 'HEM 300', '1408.00 59200.00 19400.00 303.10 202.26 59.01', 1],
  ['#946428', 'HEB 240', '102.70 11260.00 3923.00 106.00 68.04 20.61'],
];
document.getElementById('rows').innerHTML = data.map(([color, name, values, blue], i) =>
  `<tr class="${blue ? 'blue' : ''}"><th class="${i === 6 ? 'sel' : ''}">${i + 1}</th>` +
  `<td class="name"><div class="cell"><i style="background:${color}"></i><svg viewBox="0 0 14 14">${I()}</svg><span>${name}</span></div></td>` +
  `<td class="mat"><div class="cell"><i style="background:#6464ff"></i><span>1</span></div></td>` +
  values.split(' ').map((v, k) => `<td class="${k < 4 ? 'shade' : ''}${i === 6 && !k ? ' focus' : ''}">${v}</td>`).join('') +
  '<td class="shade">0.00</td><td></td></tr>').join('') +
  '<tr><th>8</th><td></td><td></td>' + '<td class="shade"></td>'.repeat(4) + '<td></td><td></td><td class="shade"></td><td></td></tr>';

// Snap grid points of the work plane.
const specks = [[13, 46], [136, 79], [271, 112], [415, 148], [133, 172], [283, 214], [133, 286], [502, 10], [637, 40], [1021, 52], [1183, 85], [937, 104], [1105, 139], [1271, 120], [1417, 64], [1477, 16], [1254, 34], [1355, 120], [1284, 181], [1477, 221], [736, 231], [916, 277], [1111, 327], [1324, 382], [475, 393], [670, 454], [883, 520], [1121, 592], [1477, 547], [1385, 676], [337, 691], [574, 787], [838, 889], [1273, 826], [121, 848], [1099, 4]];
document.getElementById('specks').setAttribute('d', specks.map(([x, y]) => `M${x - 1} ${y}h3`).join(''));
```
